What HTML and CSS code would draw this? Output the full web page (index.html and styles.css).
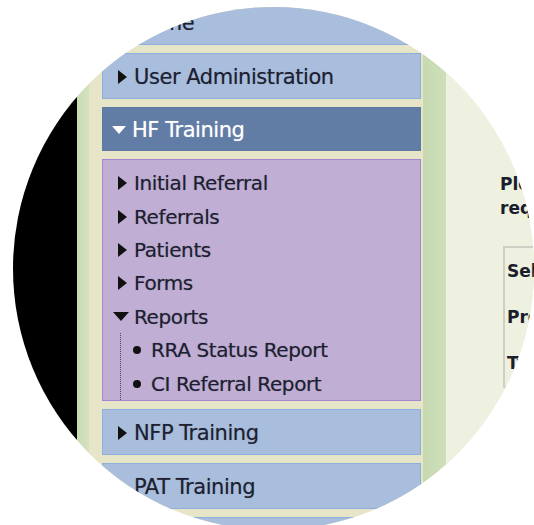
FILE: index.html
```html
<!DOCTYPE html>
<html lang="en">
<head>
<meta charset="utf-8">
<title>HF Training menu</title>
<link rel="stylesheet" href="styles.css">
</head>
<body>
<div class="lens">
  <div class="screen">
    <div class="gutter"></div>
    <div class="rail rail-left"></div>
    <nav class="sidebar">
      <div class="menu-item">
        <span class="icon"><span class="tri-right"></span></span>
        <span class="label">Home</span>
      </div>
      <div class="menu-item">
        <span class="icon"><span class="tri-right"></span></span>
        <span class="label">User Administration</span>
      </div>
      <div class="menu-item active">
        <span class="icon icon-open"><span class="tri-down tri-white"></span></span>
        <span class="label">HF Training</span>
      </div>
      <div class="submenu">
        <div class="sub-item">
          <span class="icon"><span class="tri-right"></span></span>
          <span class="label">Initial Referral</span>
        </div>
        <div class="sub-item">
          <span class="icon"><span class="tri-right"></span></span>
          <span class="label">Referrals</span>
        </div>
        <div class="sub-item">
          <span class="icon"><span class="tri-right"></span></span>
          <span class="label">Patients</span>
        </div>
        <div class="sub-item">
          <span class="icon"><span class="tri-right"></span></span>
          <span class="label">Forms</span>
        </div>
        <div class="sub-item">
          <span class="icon"><span class="tri-down"></span></span>
          <span class="label">Reports</span>
        </div>
        <div class="tree">
          <div class="leaf"><span class="dot"></span><span class="label">RRA Status Report</span></div>
          <div class="leaf"><span class="dot"></span><span class="label">CI Referral Report</span></div>
        </div>
      </div>
      <div class="menu-item">
        <span class="icon"><span class="tri-right"></span></span>
        <span class="label">NFP Training</span>
      </div>
      <div class="menu-item">
        <span class="icon"><span class="tri-right"></span></span>
        <span class="label">PAT Training</span>
      </div>
      <div class="menu-item">
        <span class="icon"><span class="tri-right"></span></span>
        <span class="label">Settings</span>
      </div>
    </nav>
    <div class="rail rail-right"></div>
    <main class="content">
      <p class="intro">Please select a report and enter the<br>required search criteria below.</p>
      <div class="form-box">
        <div class="form-row">Select Report</div>
        <div class="form-row">Program</div>
        <div class="form-row">Type</div>
      </div>
    </main>
  </div>
</div>
</body>
</html>
```

FILE: styles.css
```css
html, body {
  margin: 0;
  padding: 0;
  background: #ffffff;
}

body {
  padding: 7px 0 0 13px;
  font-family: "DejaVu Sans", Verdana, sans-serif;
}

.lens {
  width: 521px;
  height: 523px;
  border-radius: 50%;
  overflow: hidden;
  background: #eef0e0;
}

.screen {
  display: flex;
  height: 100%;
}

.gutter {
  flex: 0 0 64px;
  background: #000000;
}

.rail {
  background: #cadcb5;
}

.rail-left {
  flex: 0 0 12px;
  background: linear-gradient(to right, #c8dbb3 0, #cfdfba 60%, #d6e2c0 100%);
}

.rail-right {
  flex: 0 0 23px;
  background: linear-gradient(to right, #c6d9b1 0, #cadcb5 50%, #cddeb8 100%);
}

.sidebar {
  flex: 0 0 334px;
  box-sizing: border-box;
  padding: 0 2px 0 13px;
  background: #e6e5c8;
  display: flex;
  flex-direction: column;
  gap: 8px;
  margin-top: -8px;
}

.menu-item {
  box-sizing: border-box;
  height: 46px;
  flex: 0 0 46px;
  display: flex;
  align-items: center;
  padding: 1px 0 0 9px;
  background: #a9bedd;
  border: 1px solid #8eaedb;
  color: #1c2030;
  font-size: 21px;
  letter-spacing: -0.45px;
  white-space: nowrap;
  text-shadow: 0 0 1px rgba(20, 20, 40, 0.35);
}

.menu-item.active {
  height: 44px;
  flex-basis: 44px;
  background: #627da5;
  border-color: #5f7aa2;
  color: #ffffff;
  text-shadow: 0 0 1px rgba(255, 255, 255, 0.5);
}

.icon {
  flex: 0 0 22px;
  display: flex;
  align-items: center;
}

.icon-open {
  flex-basis: 20px;
}

.tri-right {
  width: 0;
  height: 0;
  margin-left: 5.5px;
  border-left: 9px solid #111111;
  border-top: 7.5px solid transparent;
  border-bottom: 7.5px solid transparent;
}

.tri-down {
  width: 0;
  height: 0;
  margin-left: 0.5px;
  border-top: 9.5px solid #111111;
  border-left: 8px solid transparent;
  border-right: 8px solid transparent;
}

.tri-white {
  margin-left: 0;
  border-top: 8.5px solid #ffffff;
  border-left: 7px solid transparent;
  border-right: 7px solid transparent;
}

.submenu {
  box-sizing: border-box;
  height: 242px;
  flex: 0 0 242px;
  padding: 6.5px 0 0 9px;
  background: #c0aed4;
  border: 1px solid #a683d1;
  color: #1c2030;
  font-size: 20px;
  letter-spacing: -0.4px;
  text-shadow: 0 0 1px rgba(20, 20, 40, 0.35);
  overflow: hidden;
}

.sub-item {
  display: flex;
  align-items: center;
  height: 33.4px;
  white-space: nowrap;
}

.tree {
  margin-left: 8px;
  border-left: 1px dotted #4a4a55;
}

.leaf {
  display: flex;
  align-items: center;
  height: 33.4px;
  padding-left: 12px;
  white-space: nowrap;
}

.dot {
  flex: 0 0 8px;
  height: 8px;
  border-radius: 50%;
  background: #111111;
  margin-right: 10px;
}

.content {
  flex: 0 0 300px;
  box-sizing: border-box;
  padding: 0 0 0 54px;
  background: #eef0e0;
  color: #1a1d2c;
  font-weight: bold;
  font-size: 17px;
  white-space: nowrap;
}

.intro {
  margin: 166px 0 0 0;
  line-height: 23.5px;
}

.form-box {
  margin: 26px 0 0 3px;
  border: 2px solid #cfcfc6;
  border-right: none;
  background: #eef0e0;
}

.form-row {
  height: 46px;
  display: flex;
  align-items: center;
  padding-left: 2px;
}
```
